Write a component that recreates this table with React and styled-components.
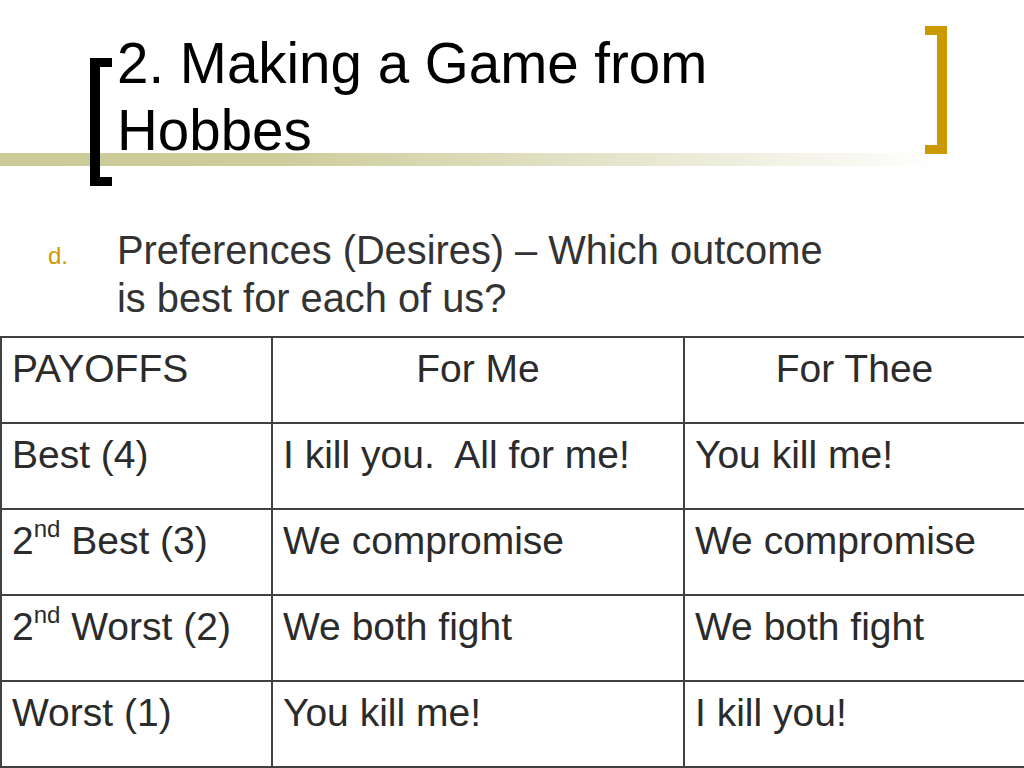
import React from 'react';
import styled, { createGlobalStyle } from 'styled-components';

const GlobalStyle = createGlobalStyle`
  html, body {
    margin: 0;
    padding: 0;
    background: #fff;
  }
  body {
    font-family: "Liberation Sans", Arial, sans-serif;
  }
`;

const Slide = styled.div`
  width: 1024px;
  height: 768px;
  overflow: hidden;
  background: #fff;
  display: flex;
  flex-direction: column;
`;

const Header = styled.header`
  position: relative;
  height: 200px;
  box-sizing: border-box;
  padding: 30px 0 0 117px;
  background-image: linear-gradient(
    to right,
    #cbcb98 0%,
    #cdcd9c 28%,
    #e3e3c9 58%,
    #ffffff 92%
  );
  background-repeat: no-repeat;
  background-position: 0 153px;
  background-size: 100% 13px;
`;

const Bracket = styled.span`
  position: absolute;
  top: ${({ side }) => (side === 'left' ? '58px' : '26px')};
  left: ${({ side }) => (side === 'left' ? '90px' : '925px')};
  width: 12px;
  height: 110px;
  border-style: solid;
  border-color: ${({ color }) => color};
  border-width: ${({ side }) => (side === 'left' ? '9px 0 9px 10px' : '9px 10px 9px 0')};
`;

const Title = styled.h1`
  margin: 0;
  max-width: 720px;
  font-size: 56.5px;
  font-weight: normal;
  line-height: 67px;
  color: #000;
`;

const Point = styled.div`
  display: flex;
  align-items: baseline;
  margin-top: 27px;
  padding-left: 48px;
`;

const Marker = styled.span`
  width: 69px;
  flex: none;
  font-size: 24px;
  color: #cc9900;
`;

const PointText = styled.p`
  margin: 0;
  width: 730px;
  font-size: 39.8px;
  line-height: 48px;
  color: #333;
`;

const Table = styled.table`
  margin-top: 14px;
  width: 1024px;
  border-collapse: collapse;
  table-layout: fixed;
`;

const Cell = styled.td`
  height: 68px;
  padding: 8px 10px;
  border: 2px solid #404040;
  vertical-align: top;
  text-align: ${({ center }) => (center ? 'center' : 'left')};
  font-size: 39px;
  line-height: 46px;
  color: #2b2b2b;
  white-space: pre;
`;

const Sup = styled.sup`
  font-size: 24px;
  line-height: 0;
  vertical-align: 0.72em;
`;

const rows = [
  { label: 'Best (4)', me: 'I kill you.  All for me!', thee: 'You kill me!' },
  { label: 'Best (3)', ord: true, me: 'We compromise', thee: 'We compromise' },
  { label: 'Worst (2)', ord: true, me: 'We both fight', thee: 'We both fight' },
  { label: 'Worst (1)', me: 'You kill me!', thee: 'I kill you!' },
];

export default function App() {
  return (
    <>
      <GlobalStyle />
      <Slide>
        <Header>
          <Bracket side="left" color="#000" />
          <Bracket side="right" color="#cc9900" />
          <Title>2. Making a Game from Hobbes</Title>
        </Header>
        <Point>
          <Marker>d.</Marker>
          <PointText>Preferences (Desires) – Which outcome is best for each of us?</PointText>
        </Point>
        <Table>
          <colgroup>
            <col style={{ width: 271 }} />
            <col style={{ width: 412 }} />
            <col style={{ width: 341 }} />
          </colgroup>
          <tbody>
            <tr>
              <Cell>PAYOFFS</Cell>
              <Cell center>For Me</Cell>
              <Cell center>For Thee</Cell>
            </tr>
            {rows.map((r) => (
              <tr key={r.label}>
                <Cell>
                  {r.ord ? (
                    <>
                      2<Sup>nd</Sup> {r.label}
                    </>
                  ) : (
                    r.label
                  )}
                </Cell>
                <Cell>{r.me}</Cell>
                <Cell>{r.thee}</Cell>
              </tr>
            ))}
          </tbody>
        </Table>
      </Slide>
    </>
  );
}
